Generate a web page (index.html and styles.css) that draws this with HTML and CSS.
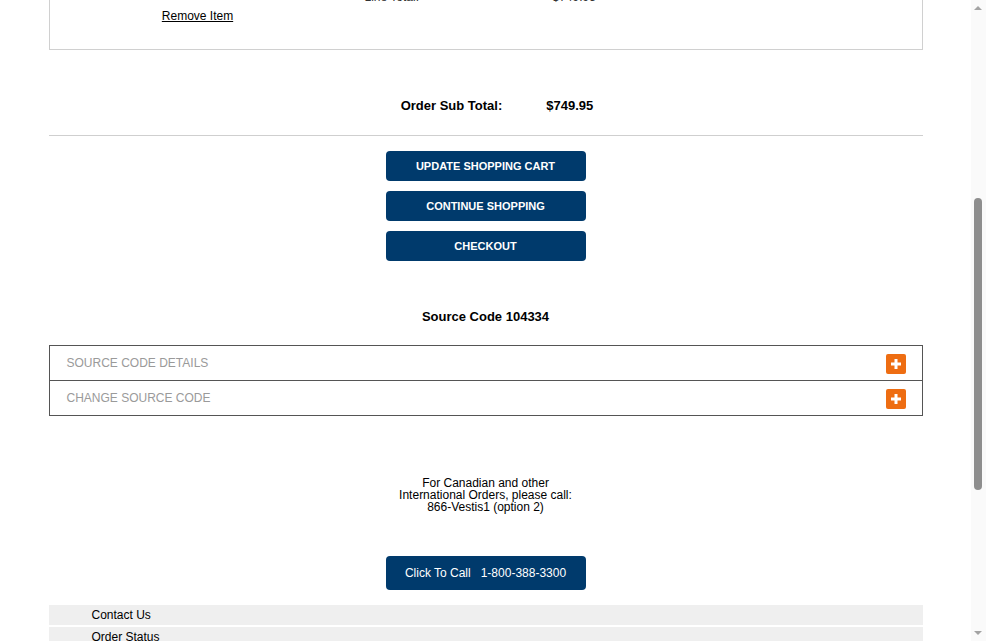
FILE: index.html
```html
<!DOCTYPE html>
<html lang="en">
<head>
<meta charset="utf-8">
<title>Shopping Cart</title>
<link rel="stylesheet" href="styles.css">
</head>
<body>
<div class="page">
  <header class="site-header">
    <div class="brand">VESTIS</div>
    <h1 class="page-title">Shopping Cart</h1>
  </header>

  <div class="cart">
    <div class="cart-head">
      <span class="head-item">Item</span>
      <span class="head-desc">Description</span>
    </div>
    <div class="item">
      <div class="item-media">
        <div class="thumb"></div>
        <a class="remove" href="#">Remove Item</a>
      </div>
      <div class="item-info">
        <div class="item-name">Uniform Package</div>
        <div class="info-row"><span class="info-label">Item Price:</span><span>$749.95</span></div>
        <div class="info-row"><span class="info-label">Quantity:</span><span>1</span></div>
        <div class="info-row"><span class="info-label">Line Total:</span><span>$749.95</span></div>
      </div>
    </div>
  </div>

  <div class="subtotal">
    <span class="sub-label">Order Sub Total:</span>
    <span class="sub-value">$749.95</span>
  </div>

  <hr class="rule">

  <div class="actions">
    <button class="btn" type="button">UPDATE SHOPPING CART</button>
    <button class="btn" type="button">CONTINUE SHOPPING</button>
    <button class="btn" type="button">CHECKOUT</button>
  </div>

  <div class="source-code">Source Code 104334</div>

  <div class="accordion">
    <div class="acc-row">
      <span class="acc-title">SOURCE CODE DETAILS</span>
      <span class="acc-plus"></span>
    </div>
    <div class="acc-row">
      <span class="acc-title">CHANGE SOURCE CODE</span>
      <span class="acc-plus"></span>
    </div>
  </div>

  <p class="intl">For Canadian and other<br>International Orders, please call:<br>866-Vestis1 (option 2)</p>

  <div class="call-wrap">
    <a class="call-btn" href="#">Click To Call&nbsp;&nbsp; 1-800-388-3300</a>
  </div>

  <ul class="footer-links">
    <li>Contact Us</li>
    <li>Order Status</li>
    <li>Shipping Information</li>
    <li>Returns &amp; Exchanges</li>
    <li>Size Charts</li>
    <li>FAQ</li>
    <li>Privacy Policy</li>
    <li>Terms of Use</li>
    <li>Accessibility</li>
    <li>Site Map</li>
  </ul>
  <div class="copyright">&copy; Vestis. All rights reserved.</div>
</div>

<div class="scrollbar" aria-hidden="true">
  <span class="sb-arrow sb-up"></span>
  <span class="sb-thumb"></span>
  <span class="sb-arrow sb-down"></span>
</div>
<script src="script.js"></script>
</body>
</html>
```

FILE: styles.css
```css
html, body {
  margin: 0;
  padding: 0;
  background: #fff;
}
body {
  font-family: "Liberation Sans", Arial, sans-serif;
  font-size: 12px;
  color: #000;
  padding-right: 15px;
}
.page {
  width: 874px;
  margin: 0 auto;
}
.site-header {
  padding: 30px 0 20px;
}
.brand {
  font-size: 28px;
  font-weight: bold;
  color: #003a6c;
  letter-spacing: 2px;
}
.page-title {
  font-size: 22px;
  margin: 30px 0 20px;
}
.cart {
  border: 1px solid #d0d0d0;
}
.cart-head {
  display: flex;
  background: #f2f2f2;
  padding: 8px 0;
  font-weight: bold;
}
.head-item {
  width: 296px;
  text-align: center;
}
.head-desc {
  padding-left: 19px;
}
.item {
  display: flex;
  align-items: flex-end;
  padding: 20px 0 26px;
}
.item-media {
  width: 296px;
  display: flex;
  flex-direction: column;
  align-items: center;
}
.thumb {
  width: 150px;
  height: 150px;
  background: #f4f4f4;
  margin-bottom: 24px;
}
.remove {
  color: #000;
  text-decoration: underline;
  line-height: 14px;
}
.item-info {
  padding-left: 19px;
  padding-bottom: 17px;
  color: #333;
}
.item-name {
  font-weight: bold;
  margin-bottom: 10px;
}
.info-row {
  display: flex;
  line-height: 18px;
}
.info-label {
  width: 188px;
}
.subtotal {
  display: flex;
  justify-content: center;
  gap: 44px;
  padding: 48px 0 21px 23px;
  font-size: 13px;
  font-weight: bold;
  line-height: 16px;
}
.rule {
  margin: 0;
  border: 0;
  border-top: 1px solid #cfcfcf;
}
.actions {
  display: flex;
  flex-direction: column;
  align-items: center;
  gap: 10px;
  padding-top: 15px;
}
.btn {
  width: 200px;
  height: 30px;
  border: 0;
  border-radius: 4px;
  background: #003a6c;
  color: #fff;
  font-family: "Liberation Sans", Arial, sans-serif;
  font-size: 11px;
  font-weight: bold;
  padding: 0;
}
.source-code {
  margin-top: 48px;
  text-align: center;
  font-size: 13px;
  font-weight: bold;
  line-height: 16px;
}
.accordion {
  margin-top: 20px;
  border: 1px solid #555;
}
.acc-row {
  display: flex;
  align-items: center;
  justify-content: space-between;
  height: 34px;
  padding: 0 16px 0 17px;
}
.acc-row + .acc-row {
  border-top: 1px solid #555;
}
.acc-title {
  color: #9a9a9a;
  font-size: 12px;
}
.acc-plus {
  position: relative;
  width: 20px;
  height: 20px;
  background: #ee6d12;
  border-radius: 2px;
  margin-top: 2px;
}
.acc-plus::before,
.acc-plus::after {
  content: "";
  position: absolute;
  background: #fff;
  left: 50%;
  top: 50%;
  transform: translate(-50%, -50%);
}
.acc-plus::before {
  width: 10px;
  height: 3px;
}
.acc-plus::after {
  width: 3px;
  height: 10px;
}
.intl {
  margin: 61px 0 0;
  text-align: center;
  line-height: 12px;
  font-size: 12px;
}
.call-wrap {
  display: flex;
  justify-content: center;
  margin-top: 43px;
}
.call-btn {
  display: flex;
  align-items: center;
  justify-content: center;
  width: 200px;
  height: 34px;
  border-radius: 4px;
  background: #003a6c;
  color: #fff;
  font-size: 12px;
  text-decoration: none;
}
.footer-links {
  list-style: none;
  margin: 15px 0 0;
  padding: 0;
  display: flex;
  flex-direction: column;
  gap: 2px;
}
.footer-links li {
  background: #efefef;
  height: 20px;
  line-height: 20px;
  padding-left: 43px;
}
.copyright {
  padding: 20px 0 30px;
  text-align: center;
  color: #555;
}

/* drawn window scrollbar (overlay on the right edge) */
.scrollbar {
  position: fixed;
  top: 0;
  right: 0;
  width: 15px;
  height: 100%;
  background: #fafafa;
}
.sb-arrow {
  position: absolute;
  left: 3px;
  width: 0;
  height: 0;
  border-left: 4px solid transparent;
  border-right: 4px solid transparent;
}
.sb-up {
  top: 6px;
  border-bottom: 4px solid #a3a3a3;
}
.sb-down {
  bottom: 6px;
  border-top: 4px solid #a3a3a3;
}
.sb-thumb {
  position: absolute;
  top: 198px;
  left: 3px;
  width: 8px;
  height: 292px;
  border-radius: 4px;
  background: #8e8e8e;
}
```

FILE: script.js
```js
(function () {
  function place() {
    var cart = document.querySelector('.cart');
    if (!cart) return;
    var r = cart.getBoundingClientRect();
    window.scrollTo(0, r.bottom + window.scrollY - 50);
  }
  place();
  window.addEventListener('load', place);
})();
```
